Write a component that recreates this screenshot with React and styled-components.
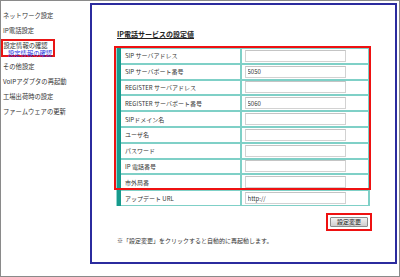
import React from "react";
import styled, { createGlobalStyle } from "styled-components";

const Global = createGlobalStyle`
  html, body { margin: 0; padding: 0; background: #fff; }
  body { font-family: "Noto Sans CJK JP", "Noto Sans", sans-serif; color: #333; }
  * { box-sizing: border-box; }
`;

const Frame = styled.div`
  width: 400px;
  height: 277px;
  border: 1px solid #8a8a8a;
  display: flex;
  align-items: flex-start;
  overflow: hidden;
`;

const Nav = styled.nav`
  width: 89px;
  flex: none;
  padding-top: 6.5px;
  display: flex;
  flex-direction: column;
  font-size: 6.3px;
`;

const NavItem = styled.div`
  height: 15px;
  line-height: 15px;
  padding-left: 2px;
  white-space: nowrap;
  color: #333;
`;

const NavGroup = styled.div`
  margin: 1.5px 0 2.2px 0;
  width: 54px;
  height: 18px;
  border: 2px solid #e81515;
  padding: 0 0 0 0.5px;
  display: flex;
  flex-direction: column;
`;

const NavLine = styled.div`
  height: 7px;
  line-height: 7px;
  margin-top: ${(p) => (p.$sub ? "1.5px" : "0.5px")};
  white-space: nowrap;
  color: ${(p) => (p.$sub ? "#2233dd" : "#333")};
  padding-left: ${(p) => (p.$sub ? "4.5px" : "0")};
`;

const Panel = styled.main`
  margin-top: 2px;
  width: 307px;
  height: 261px;
  flex: none;
  border: 2px solid #2b2b9e;
  padding: 24px 0 0 25px;
  display: flex;
  flex-direction: column;
  align-items: flex-start;
`;

const Title = styled.h2`
  margin: 0 0 9px 0;
  font-size: 7px;
  line-height: 10px;
  font-weight: bold;
  color: #222;
  text-decoration: underline;
  text-underline-offset: 1px;
`;

const TableWrap = styled.div`
  position: relative;
`;

const Table = styled.div`
  width: 253px;
  display: grid;
  grid-template-columns: 119px 126px;
  grid-auto-rows: 13.8px;
  gap: 2px;
  padding: 1px 2px 1px 0;
  background: #7fd0c7;
  border-left: 4px solid #179a8c;
  box-shadow: -1px 0 0 #8fd6cf;
`;

const LabelCell = styled.div`
  background: #fff;
  font-size: 6px;
  padding-left: 4px;
  display: flex;
  align-items: center;
  white-space: nowrap;
  color: #333;
`;

const InputCell = styled.div`
  background: #fff;
  padding-left: 3px;
  display: flex;
  align-items: center;
`;

const Field = styled.input`
  width: 101px;
  height: 12px;
  border: 1px solid #d2d2d2;
  border-top-color: #c4c4c4;
  background: #fff;
  font-family: inherit;
  font-size: 6px;
  color: #333;
  padding: 0 0 0 1.5px;
  margin: 0;
  outline: none;
`;

const Highlight = styled.div`
  position: absolute;
  top: -2px;
  left: -3px;
  width: 257px;
  height: 144px;
  border: 2px solid #ee1111;
  pointer-events: none;
`;

const ButtonRow = styled.div`
  width: 253px;
  margin-top: 7px;
  display: flex;
  justify-content: flex-end;
`;

const ButtonBox = styled.div`
  margin-right: -2px;
  border: 2px solid #ee1111;
  padding: 2px;
  display: flex;
`;

const Button = styled.button`
  width: 38px;
  height: 10px;
  padding: 0;
  margin: 0;
  border: 1px solid #8c8c8c;
  border-radius: 1px;
  background: linear-gradient(#f2f2f2, #cfcfcf);
  font-family: inherit;
  font-size: 6px;
  line-height: 8px;
  color: #222;
`;

const Note = styled.p`
  margin: 6px 0 0 0;
  font-size: 6px;
  line-height: 8px;
  color: #333;
  white-space: nowrap;
`;

const rows = [
  ["SIP サーバアドレス", ""],
  ["SIP サーバポート番号", "5050"],
  ["REGISTER サーバアドレス", ""],
  ["REGISTER サーバポート番号", "5060"],
  ["SIPドメイン名", ""],
  ["ユーザ名", ""],
  ["パスワード", ""],
  ["IP 電話番号", ""],
  ["市外局番", ""],
  ["アップデート URL", "http://"],
];

export default function App() {
  return (
    <>
      <Global />
      <Frame>
        <Nav>
          <NavItem>ネットワーク設定</NavItem>
          <NavItem>IP電話設定</NavItem>
          <NavGroup>
            <NavLine>設定情報の確認</NavLine>
            <NavLine $sub>設定情報の確認</NavLine>
          </NavGroup>
          <NavItem>その他設定</NavItem>
          <NavItem>VoIPアダプタの再起動</NavItem>
          <NavItem>工場出荷時の設定</NavItem>
          <NavItem>ファームウェアの更新</NavItem>
        </Nav>
        <Panel>
          <Title>IP電話サービスの設定値</Title>
          <TableWrap>
            <Table>
              {rows.map(([label, value]) => (
                <React.Fragment key={label}>
                  <LabelCell>{label}</LabelCell>
                  <InputCell>
                    <Field type="text" defaultValue={value} />
                  </InputCell>
                </React.Fragment>
              ))}
            </Table>
            <Highlight />
          </TableWrap>
          <ButtonRow>
            <ButtonBox>
              <Button type="button">設定変更</Button>
            </ButtonBox>
          </ButtonRow>
          <Note>※「設定変更」をクリックすると自動的に再起動します。</Note>
        </Panel>
      </Frame>
    </>
  );
}
